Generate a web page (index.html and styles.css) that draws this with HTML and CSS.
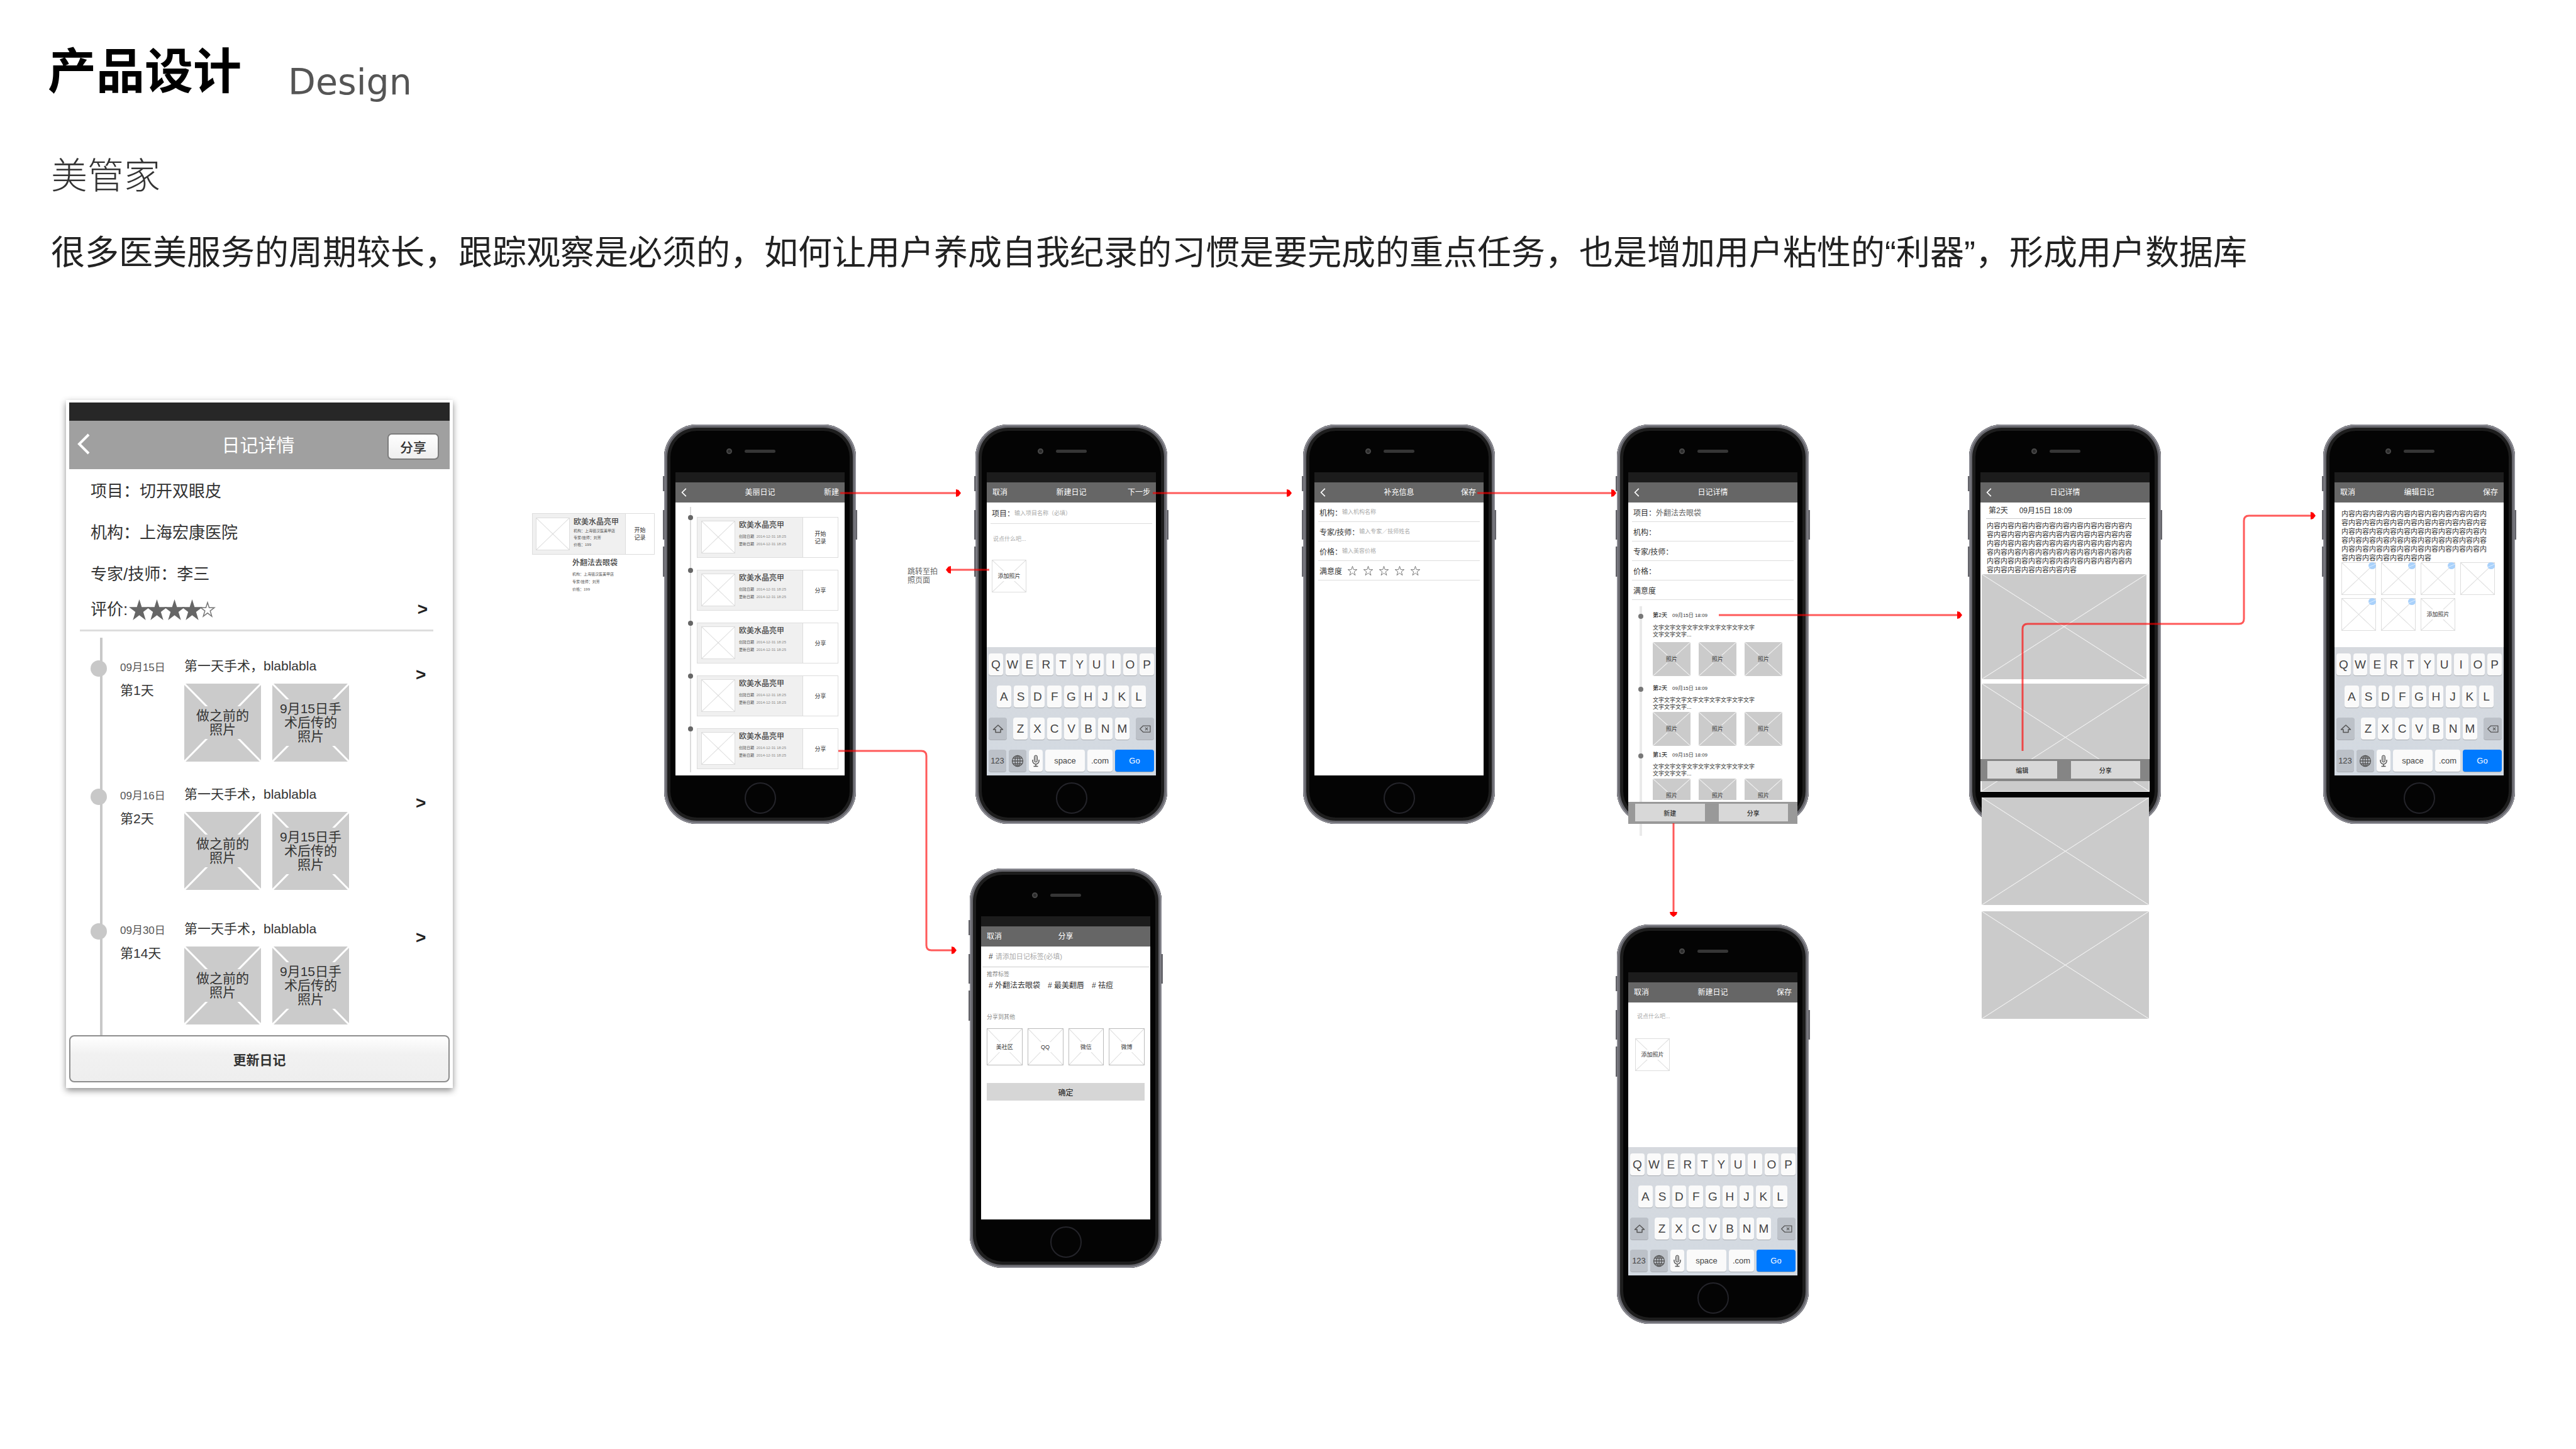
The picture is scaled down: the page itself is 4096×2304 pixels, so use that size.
FILE: index.html
```html
<!DOCTYPE html>
<html lang="zh-CN">
<head>
<meta charset="utf-8">
<title>产品设计 Design</title>
<link rel="stylesheet" href="styles.css">
</head>
<body>
<svg class="defs" aria-hidden="true">
  <symbol id="back" viewBox="0 0 20 34"><path d="M18 2 3 17l15 15" fill="none" stroke="#fff" stroke-width="4"/></symbol>
  <symbol id="star" viewBox="0 0 34 34"><path d="M17 0l4 12.500h13L23.500 20.500 27.500 34 17 26 6.500 34l4-13.500L0 12.500h13z"/></symbol>
  <symbol id="hollow" viewBox="0 0 26 26"><path d="M13 2l2.600 8.200h8.400l-6.800 5.200 2.600 8.600-6.800-5.200-6.800 5.200 2.600-8.600L2 10.200h8.400z" fill="#fff" stroke="#777" stroke-width="1.500"/></symbol>
  <symbol id="shift" viewBox="0 0 20 18"><path d="M10 3 2.500 10H6v4.500h8V10h3.500z" fill="none" stroke="#555" stroke-width="1.500" stroke-linejoin="round"/></symbol>
  <symbol id="erase" viewBox="0 0 24 18"><path d="M8 3h13.500v12H8L2 9zM12 6.500l5 5m0-5-5 5" fill="none" stroke="#555" stroke-width="1.500" stroke-linejoin="round"/></symbol>
  <symbol id="globe" viewBox="0 0 20 20"><g fill="none" stroke="#555" stroke-width="1.300"><circle cx="10" cy="10" r="8.500"/><ellipse cx="10" cy="10" rx="4" ry="8.500"/><path d="M1.500 10h17M10 1.500v17M3 5.500h14M3 14.500h14"/></g></symbol>
  <symbol id="mic" viewBox="0 0 16 20"><rect x="5.500" y="1" width="5" height="11" rx="2.500" fill="#bbb" stroke="#555"/><path d="M3 8v2a5 5 0 0 0 10 0V8M8 15v3.500M4.500 18.500h7" fill="none" stroke="#555" stroke-width="1.500"/></symbol>
</svg>

<header class="intro">
  <div class="heading">
    <h1>产品设计</h1>
    <span class="en">Design</span>
  </div>
  <h2>美管家</h2>
  <p>很多医美服务的周期较长，跟踪观察是必须的，如何让用户养成自我纪录的习惯是要完成的重点任务，也是增加用户粘性的“利器”，形成用户数据库</p>
</header>

<main class="flow">
  <article class="card">
    <div class="card-status"></div>
    <div class="card-nav">
      <svg class="card-back"><use href="#back"/></svg>
      <h3>日记详情</h3>
      <button class="share">分享</button>
    </div>
    <div class="info">
      <p>项目：切开双眼皮</p>
      <p>机构：上海宏康医院</p>
      <p>专家/技师：李三</p>
      <p class="rate">评价:
        <span class="stars"><svg><use href="#star"/></svg><svg><use href="#star"/></svg><svg><use href="#star"/></svg><svg><use href="#star"/></svg><svg class="off"><use href="#hollow"/></svg></span>
        <b>&gt;</b></p>
    </div>
    <ol class="diary">
      <li><time>09月15日</time><span>第一天手术，blablabla</span><b>&gt;</b><em>第1天</em>
        <div class="shots"><div class="shot"><span>做之前的<br>照片</span></div><div class="shot"><span>9月15日手<br>术后传的<br>照片</span></div></div></li>
      <li class="roomy"><time>09月16日</time><span>第一天手术，blablabla</span><b>&gt;</b><em>第2天</em>
        <div class="shots"><div class="shot"><span>做之前的<br>照片</span></div><div class="shot"><span>9月15日手<br>术后传的<br>照片</span></div></div></li>
      <li><time>09月30日</time><span>第一天手术，blablabla</span><b>&gt;</b><em>第14天</em>
        <div class="shots"><div class="shot"><span>做之前的<br>照片</span></div><div class="shot"><span>9月15日手<br>术后传的<br>照片</span></div></div></li>
    </ol>
    <button class="update">更新日记</button>
  </article>

  <div class="board">
    <div class="entry loose">
      <div class="entry-main"><i class="thumb"></i><div><h4>欧美水晶亮甲</h4><p>机构：上海铭汉医美甲店</p><p>专家/技师：刘芳</p><p>价格：199</p></div></div>
      <span class="entry-side">开始<br>记录</span>
    </div>
    <div class="loose-text"><h4>外翻法去眼袋</h4><p>机构：上海铭汉医美甲店</p><p>专家/技师：刘芳</p><p>价格：199</p></div>
    <p class="note">跳转至拍<br>照页面</p>

    <section class="phone at-list">
      <div class="bezel"><i class="camera"></i><i class="speaker"></i></div>
      <div class="status"></div>
      <div class="nav"><svg class="back"><use href="#back"/></svg><h3>美丽日记</h3><button>新建</button></div>
      <div class="screen list">
        <div class="entry"><div class="entry-main"><i class="thumb"></i><div><h4>欧美水晶亮甲</h4><p>创建日期 <time>2014-12-31 18:25</time></p><p>更新日期 <time>2014-12-31 18:25</time></p></div></div><span class="entry-side">开始<br>记录</span></div>
        <div class="entry"><div class="entry-main"><i class="thumb"></i><div><h4>欧美水晶亮甲</h4><p>创建日期 <time>2014-12-31 18:25</time></p><p>更新日期 <time>2014-12-31 18:25</time></p></div></div><span class="entry-side">分享</span></div>
        <div class="entry"><div class="entry-main"><i class="thumb"></i><div><h4>欧美水晶亮甲</h4><p>创建日期 <time>2014-12-31 18:25</time></p><p>更新日期 <time>2014-12-31 18:25</time></p></div></div><span class="entry-side">分享</span></div>
        <div class="entry"><div class="entry-main"><i class="thumb"></i><div><h4>欧美水晶亮甲</h4><p>创建日期 <time>2014-12-31 18:25</time></p><p>更新日期 <time>2014-12-31 18:25</time></p></div></div><span class="entry-side">分享</span></div>
        <div class="entry"><div class="entry-main"><i class="thumb"></i><div><h4>欧美水晶亮甲</h4><p>创建日期 <time>2014-12-31 18:25</time></p><p>更新日期 <time>2014-12-31 18:25</time></p></div></div><span class="entry-side">分享</span></div>
      </div>
      <div class="chin"><i class="home"></i></div>
    </section>

    <section class="phone at-create">
      <div class="bezel"><i class="camera"></i><i class="speaker"></i></div>
      <div class="status"></div>
      <div class="nav"><button>取消</button><h3>新建日记</h3><button>下一步</button></div>
      <div class="screen compose">
        <div class="field tall"><label for="item">项目：</label><input id="item" placeholder="输入项目名称（必填）"></div>
        <textarea aria-label="日记内容" placeholder="说点什么吧..."></textarea>
        <button class="thumb add"><span>添加照片</span></button>
        <div class="keys">
          <div class="row"><button>Q</button><button>W</button><button>E</button><button>R</button><button>T</button><button>Y</button><button>U</button><button>I</button><button>O</button><button>P</button></div>
          <div class="row second"><button>A</button><button>S</button><button>D</button><button>F</button><button>G</button><button>H</button><button>J</button><button>K</button><button>L</button></div>
          <div class="row third"><button class="dim" aria-label="Shift"><svg><use href="#shift"/></svg></button><button>Z</button><button>X</button><button>C</button><button>V</button><button>B</button><button>N</button><button>M</button><button class="dim" aria-label="Delete"><svg><use href="#erase"/></svg></button></div>
          <div class="row fourth"><button class="dim">123</button><button class="dim" aria-label="Language"><svg><use href="#globe"/></svg></button><button aria-label="Dictate"><svg><use href="#mic"/></svg></button><button>space</button><button>.com</button><button class="go">Go</button></div>
        </div>
      </div>
      <div class="chin"><i class="home"></i></div>
    </section>

    <section class="phone at-share">
      <div class="bezel"><i class="camera"></i><i class="speaker"></i></div>
      <div class="status"></div>
      <div class="nav"><button>取消</button><h3>分享</h3><span></span></div>
      <div class="screen sharing">
        <div class="tagline"><label for="tag"># </label><input id="tag" placeholder="请添加日记标签(必填)"></div>
        <p class="hint">推荐标签</p>
        <p class="tags"><span># 外翻法去眼袋</span><span># 最美翻唇</span><span># 祛痘</span></p>
        <p class="hint lower">分享到其他</p>
        <div class="targets"><button class="thumb"><span>美社区</span></button><button class="thumb"><span>QQ</span></button><button class="thumb"><span>微信</span></button><button class="thumb"><span>微博</span></button></div>
        <button class="confirm">确定</button>
      </div>
      <div class="chin"><i class="home"></i></div>
    </section>

    <section class="phone at-extra">
      <div class="bezel"><i class="camera"></i><i class="speaker"></i></div>
      <div class="status"></div>
      <div class="nav"><svg class="back"><use href="#back"/></svg><h3>补充信息</h3><button class="inset">保存</button></div>
      <div class="screen">
        <div class="field"><label for="org">机构：</label><input id="org" placeholder="输入机构名称"></div>
        <div class="field"><label for="pro">专家/技师：</label><input id="pro" placeholder="输入专家／技师姓名"></div>
        <div class="field"><label for="cost">价格：</label><input id="cost" placeholder="输入美容价格"></div>
        <div class="field">满意度<span class="score"><svg><use href="#hollow"/></svg><svg><use href="#hollow"/></svg><svg><use href="#hollow"/></svg><svg><use href="#hollow"/></svg><svg><use href="#hollow"/></svg></span></div>
      </div>
      <div class="chin"><i class="home"></i></div>
    </section>

    <section class="phone at-detail">
      <div class="bezel"><i class="camera"></i><i class="speaker"></i></div>
      <div class="status"></div>
      <div class="nav"><svg class="back"><use href="#back"/></svg><h3>日记详情</h3><span></span></div>
      <div class="screen detail">
        <div class="field">项目：<span>外翻法去眼袋</span></div>
        <div class="field">机构：</div>
        <div class="field">专家/技师：</div>
        <div class="field">价格：</div>
        <div class="field">满意度</div>
        <ol class="track">
          <li><b>第2天</b><time>09月15日 18:09</time><p>文字文字文字文字文字文字文字文字文字<br>文字文字文字...</p><div class="trio"><div><span>照片</span></div><div><span>照片</span></div><div><span>照片</span></div></div></li>
          <li><b>第2天</b><time>09月15日 18:09</time><p>文字文字文字文字文字文字文字文字文字<br>文字文字文字...</p><div class="trio"><div><span>照片</span></div><div><span>照片</span></div><div><span>照片</span></div></div></li>
          <li><b>第1天</b><time>09月15日 18:09</time><p>文字文字文字文字文字文字文字文字文字<br>文字文字文字...</p><div class="trio"><div><span>照片</span></div><div><span>照片</span></div><div><span>照片</span></div></div></li>
        </ol>
        <div class="bar low"><button>新建</button><button>分享</button></div>
      </div>
      <div class="chin"></div>
    </section>

    <section class="phone at-new">
      <div class="bezel"><i class="camera"></i><i class="speaker"></i></div>
      <div class="status"></div>
      <div class="nav"><button>取消</button><h3>新建日记</h3><button>保存</button></div>
      <div class="screen compose blank">
        <textarea aria-label="日记内容" placeholder="说点什么吧..."></textarea>
        <button class="thumb add"><span>添加照片</span></button>
        <div class="keys">
          <div class="row"><button>Q</button><button>W</button><button>E</button><button>R</button><button>T</button><button>Y</button><button>U</button><button>I</button><button>O</button><button>P</button></div>
          <div class="row second"><button>A</button><button>S</button><button>D</button><button>F</button><button>G</button><button>H</button><button>J</button><button>K</button><button>L</button></div>
          <div class="row third"><button class="dim" aria-label="Shift"><svg><use href="#shift"/></svg></button><button>Z</button><button>X</button><button>C</button><button>V</button><button>B</button><button>N</button><button>M</button><button class="dim" aria-label="Delete"><svg><use href="#erase"/></svg></button></div>
          <div class="row fourth"><button class="dim">123</button><button class="dim" aria-label="Language"><svg><use href="#globe"/></svg></button><button aria-label="Dictate"><svg><use href="#mic"/></svg></button><button>space</button><button>.com</button><button class="go">Go</button></div>
        </div>
      </div>
      <div class="chin"><i class="home"></i></div>
    </section>

    <section class="phone at-day">
      <div class="bezel"><i class="camera"></i><i class="speaker"></i></div>
      <div class="status"></div>
      <div class="nav"><svg class="back"><use href="#back"/></svg><h3>日记详情</h3><span></span></div>
      <div class="screen day">
        <p class="when"><span>第2天</span><time>09月15日 18:09</time></p>
        <p class="body">内容内容内容内容内容内容内容内容内容内容内<br>容内容内容内容内容内容内容内容内容内容内容<br>内容内容内容内容内容内容内容内容内容内容内<br>容内容内容内容内容内容内容内容内容内容内容<br>内容内容内容内容内容内容内容内容内容内容内<br>容内容内容内容内容内容内容</p>
        <div class="picture"></div>
        <div class="picture wide"></div>
        <div class="picture wide"></div>
        <div class="picture wide"></div>
        <div class="bar mid"><button>编辑</button><button>分享</button></div>
      </div>
      <div class="chin"></div>
    </section>

    <section class="phone at-edit">
      <div class="bezel"><i class="camera"></i><i class="speaker"></i></div>
      <div class="status"></div>
      <div class="nav"><button>取消</button><h3>编辑日记</h3><button>保存</button></div>
      <div class="screen compose editing">
        <p class="body">内容内容内容内容内容内容内容内容内容内容内<br>容内容内容内容内容内容内容内容内容内容内容<br>内容内容内容内容内容内容内容内容内容内容内<br>容内容内容内容内容内容内容内容内容内容内容<br>内容内容内容内容内容内容内容内容内容内容内<br>容内容内容内容内容内容内容</p>
        <div class="gallery"><i class="thumb del"></i><i class="thumb del"></i><i class="thumb del"></i><i class="thumb del"></i><i class="thumb del"></i><i class="thumb del"></i><button class="thumb"><span>添加照片</span></button></div>
        <div class="keys">
          <div class="row"><button>Q</button><button>W</button><button>E</button><button>R</button><button>T</button><button>Y</button><button>U</button><button>I</button><button>O</button><button>P</button></div>
          <div class="row second"><button>A</button><button>S</button><button>D</button><button>F</button><button>G</button><button>H</button><button>J</button><button>K</button><button>L</button></div>
          <div class="row third"><button class="dim" aria-label="Shift"><svg><use href="#shift"/></svg></button><button>Z</button><button>X</button><button>C</button><button>V</button><button>B</button><button>N</button><button>M</button><button class="dim" aria-label="Delete"><svg><use href="#erase"/></svg></button></div>
          <div class="row fourth"><button class="dim">123</button><button class="dim" aria-label="Language"><svg><use href="#globe"/></svg></button><button aria-label="Dictate"><svg><use href="#mic"/></svg></button><button>space</button><button>.com</button><button class="go">Go</button></div>
        </div>
      </div>
      <div class="chin"><i class="home"></i></div>
    </section>

    <svg class="links" aria-hidden="true">
      <marker id="tip" viewBox="0 0 8 12" refX="7" refY="6" markerWidth="8" markerHeight="12" markerUnits="userSpaceOnUse" orient="auto"><path d="M0 0l4 1 4 5-4 5-4 1z" fill="#f00"/></marker>
      <path d="M596 148H787"/>
      <path d="M1093 148H1313"/>
      <path d="M1609 148H1829"/>
      <path d="M833 270H765"/>
      <path d="M593 558H725q8 0 8 8V867q0 8 8 8H780"/>
      <path d="M1993 342H2379"/>
      <path d="M1921 673V821"/>
      <path d="M2476 558V364q0-8 8-8H2820q8 0 8-8V192q0-8 8-8H2941"/>
    </svg>
  </div>
</main>
</body>
</html>
```
FILE: styles.css
```css
* { box-sizing: border-box; margin: 0; padding: 0; }
body { background: #fff; color: #333; font-family: "Liberation Sans", "Noto Sans CJK SC", sans-serif; }
button, input, textarea { font: inherit; color: inherit; border: 0; background: none; border-radius: 0; }
ol { list-style: none; }
i, em { font-style: normal; }
svg { display: block; }
.defs { position: absolute; width: 0; height: 0; }

/* Intro */
.intro { padding: 74px 76px 194px; }
.heading { display: flex; gap: 74px; height: 90px; }
h1 { font-size: 77px; line-height: 80px; font-weight: 700; color: #000; }
.en { padding-top: 24px; font: 57px/64px "DejaVu Sans", sans-serif; color: #555; }
h2 { margin-top: 76px; padding-left: 5px; font-size: 58px; line-height: 80px; font-weight: 300; color: #333; }
.intro > p { margin-top: 42px; padding-left: 5px; font-size: 54px; line-height: 80px; font-weight: 400; color: #222; }

.flow { display: flex; align-items: flex-start; padding-left: 105px; }

/* Detail card */
.card { flex: none; width: 615px; margin-right: 20px; padding: 4px 5px 9px; background: #fff; box-shadow: 0 4px 10px rgba(0, 0, 0, .45); }
.card-status { height: 29px; background: #272727; }
.card-nav { display: grid; grid-template-columns: 120px 1fr 120px; align-items: center; height: 77px; padding: 0 17px 4px 13px; background: #a0a0a0; }
.card-back { width: 20px; height: 34px; }
.card-nav h3 { text-align: center; font-size: 29px; font-weight: 400; color: #fff; }
.share { justify-self: end; width: 82px; height: 42px; margin-top: 8px; border: 2px solid #7c7c7c; border-radius: 7px; background: linear-gradient(#fff, #eee); font-size: 21px; font-weight: 500; }
.info { margin: 0 26px 0 17px; padding: 2px 0 9px 17px; border-bottom: 3px solid #ddd; font-size: 26px; }
.info p { line-height: 66px; }
.info .rate { display: flex; align-items: center; line-height: 46px; }
.stars { display: flex; align-items: center; margin-left: 2px; }
.stars svg { width: 33px; height: 33px; margin-right: -5px; fill: #666; }
.stars .off { width: 26px; height: 26px; margin-right: 0; }
.card b { font-size: 28px; color: #222; }
.rate b { margin: 0 9px 0 auto; }
.diary { position: relative; padding: 44px 0 17px; }
.diary::before { content: ""; position: absolute; left: 49px; top: 10px; bottom: 0; width: 4px; background: #c8c8c8; }
.diary li { position: relative; display: grid; grid-template-columns: 102px 1fr 54px; grid-template-rows: 22px 124px; row-gap: 17px; padding: 0 0 41px 81px; font-size: 21px; line-height: 22px; }
.diary .roomy { padding-bottom: 51px; }
.diary li:last-child { padding-bottom: 0; }
.diary li::before { content: ""; position: absolute; left: 34px; top: 2px; width: 26px; height: 26px; border-radius: 50%; background: #c8c8c8; }
.diary time { padding-top: 3px; font-size: 17px; color: #555; }
.diary b { padding-top: 14px; }
.shots { display: flex; gap: 18px; }
.shot { display: grid; place-items: center; width: 122px; height: 124px; text-align: center;
  background: linear-gradient(to top right, transparent calc(50% - 2px), #fff calc(50% - 1px), #fff calc(50% + 1px), transparent calc(50% + 2px)), linear-gradient(to bottom right, transparent calc(50% - 2px), #fff calc(50% - 1px), #fff calc(50% + 1px), transparent calc(50% + 2px)), #cbcbcb; }
.shot span { width: 100%; padding: 4px 0; background: #cbcbcb; }
.update { display: block; width: 100%; height: 75px; border: 2px solid #8c8c8c; border-radius: 8px; background: linear-gradient(#fff, #f1f1f1 40%, #eee); font-size: 21px; font-weight: 700; }

/* Flow board */
.board { position: relative; flex: 1; height: 1480px; font-size: 12px; }
.links { position: absolute; inset: 0; width: 100%; height: 100%; fill: none; stroke: rgba(255, 0, 0, .65); stroke-width: 3; }
.links > path { marker-end: url(#tip); }
.links marker path { stroke: none; }

.phone { position: absolute; display: flex; flex-direction: column; width: 305px; height: 635px; padding: 0 18px; border-radius: 52px; background: #040404; box-shadow: inset 0 0 0 2px #8c8c94, inset 0 0 0 5px #66666c, inset 0 0 0 10px #1d1d1d; }
.phone::before { content: ""; position: absolute; left: -2px; top: 82px; width: 3px; height: 160px; background: linear-gradient(#66666c 24px, transparent 24px 54px, #66666c 54px 101px, transparent 101px 112px, #66666c 112px); }
.phone::after { content: ""; position: absolute; right: -2px; top: 136px; width: 3px; height: 47px; background: #66666c; }
.at-list { left: 316px; top: 39px; }
.at-create { left: 811px; top: 39px; }
.at-share { left: 802px; top: 745px; }
.at-extra { left: 1332px; top: 39px; }
.at-detail { left: 1831px; top: 39px; }
.at-new { left: 1831px; top: 834px; }
.at-day { left: 2391px; top: 39px; }
.at-edit { left: 2954px; top: 39px; }
.bezel { flex: none; display: grid; grid-template-columns: 1fr 49px 1fr; align-items: center; height: 76px; padding-top: 8px; }
.camera { justify-self: end; width: 9px; height: 9px; margin-right: 20px; border-radius: 50%; background: #2c2c2c; border: 2px solid #484848; }
.speaker { height: 5px; border-radius: 3px; background: #363636; }
.status { flex: none; height: 16px; background: #1c1c1c; }
.nav { flex: none; display: grid; grid-template-columns: 1fr 1fr 1fr; align-items: center; height: 32px; padding: 0 9px; background: #666; color: #fff; line-height: 16px; }
.nav h3 { text-align: center; font-size: 12px; font-weight: 400; }
.nav button { justify-self: start; }
.nav :last-child { justify-self: end; }
.nav .inset { margin-right: 3px; }
.back { width: 9px; height: 14px; }
.screen { position: relative; flex: none; display: flex; flex-direction: column; height: 434px; background: #fff; }
.chin { flex: 1; display: grid; place-items: center; }
.home { width: 50px; height: 50px; margin-top: -6px; border-radius: 50%; border: 2px solid #24242a; }

.thumb { display: grid; place-items: center; width: 55px; height: 52px; border: 1px solid #ddd; font-size: 9px; line-height: 12px;
  background: linear-gradient(to top right, transparent calc(50% - 1px), #ddd 50%, transparent calc(50% + 1px)), linear-gradient(to bottom right, transparent calc(50% - 1px), #ddd 50%, transparent calc(50% + 1px)), #fff; }
.thumb span { padding: 2px; background: #fff; }

/* List entries */
.entry { display: flex; height: 65px; border: 1px solid #ddd; }
.entry-main { display: flex; gap: 6px; width: 168px; padding: 5px 6px; background: #f0f0f0; border-right: 1px solid #ddd; }
.entry-main .thumb { flex: none; width: 54px; }
.entry h4, .loose-text h4 { font-size: 12px; line-height: 14px; font-weight: 500; color: #444; margin-bottom: 5px; white-space: nowrap; }
.entry p, .loose-text p { font-size: 6px; line-height: 12px; color: #555; white-space: nowrap; }
.entry time { margin-left: 2px; color: #888; }
.entry-side { flex: 1; display: grid; place-items: center; text-align: center; font-size: 9px; line-height: 12px; }
.loose { position: absolute; left: 106px; top: 180px; width: 195px; height: 66px; }
.loose .entry-main { width: 148px; padding: 6px 5px; }
.loose h4 { margin-bottom: 2px; }
.loose p { line-height: 11px; }
.loose-text { position: absolute; left: 170px; top: 252px; }
.note { position: absolute; left: 703px; top: 266px; line-height: 14px; color: #666; }
.list { gap: 19px; padding: 23px 10px 0 34px; }
.list::before { content: ""; position: absolute; left: 23px; top: 7px; bottom: 5px; width: 2px; background: #ddd; }
.list .entry { position: relative; }
.list .entry::before { content: ""; position: absolute; left: -15px; top: -4px; width: 8px; height: 8px; border-radius: 50%; background: #666; }

/* Forms */
.field { flex: none; display: flex; align-items: center; height: 31px; margin: 0 6px; padding: 0 2px; border-bottom: 1px solid #ddd; }
.field.tall { height: 34px; }
.field input { flex: 1; min-width: 0; font-size: 9px; }
::placeholder { color: #aaa; opacity: 1; }
.field span { color: #666; }
.score { display: flex; gap: 8px; margin-left: 8px; }
.score svg { width: 17px; height: 17px; }
.compose textarea { display: block; height: 45px; margin: 17px 10px 0; font-size: 9px; line-height: 14px; resize: none; }
.add { flex: none; margin: -5px 8px 0; }
.blank textarea { margin: 15px 14px 0; height: 42px; }
.blank .add { margin: 0 11px; }
.keys { margin-top: auto; display: grid; gap: 16px; height: 204px; padding: 10px 3px 6px; background: linear-gradient(#d6d9de, #d3dae2); }
.row { display: grid; grid-template-columns: repeat(10, 1fr); gap: 4px; height: 35px; }
.second { grid-template-columns: repeat(9, 1fr); margin: 0 13px; }
.third { grid-template-columns: 29px 2px repeat(7, 1fr) 2px 29px; }
.third button:nth-child(2) { grid-column: 3; }
.third button:last-child { grid-column: 11; }
.fourth { grid-template-columns: 28px 28px 22px 63px 1fr 62px; }
.keys button { display: grid; place-items: center; border-radius: 4px; background: #fafafa; box-shadow: 0 1px 0 #a9adb3; font-size: 19px; line-height: 35px; color: #444; }
.keys .fourth button { font-size: 13px; }
.keys .dim { background: #bcc1c8; }
.keys .go { background: #007aff; color: #fff; }
.keys svg { width: 20px; height: 20px; }

.sharing { padding: 0 9px; }
.tagline { display: flex; align-items: center; gap: 4px; height: 33px; margin: 0 -7px; padding: 0 10px; border-bottom: 1px solid #ccc; }
.tagline input { flex: 1; font-size: 11px; }
.hint { margin-top: 4px; font-size: 9px; line-height: 14px; color: #888; }
.tags { display: flex; gap: 12px; margin-top: 3px; padding-left: 3px; line-height: 16px; }
.hint.lower { margin-top: 35px; }
.targets { display: flex; gap: 8px; margin-top: 11px; }
.targets .thumb { flex: 1; height: 59px; border-color: #bbb; }
.confirm { margin-top: 28px; height: 28px; background: #d6d6d6; font-weight: 500; }

/* Diary detail */
.detail { height: 511px; }
.track { position: relative; height: 442px; padding: 18px 0 0 39px; font-size: 9px; line-height: 12px; }
.track::before { content: ""; position: absolute; left: 18px; top: 10px; height: 365px; width: 4px; background: #eaeaea; }
.track li { position: relative; height: 116px; }
.track li + li { height: 106px; }
.track li::before { content: ""; position: absolute; left: -23px; top: 4px; width: 8px; height: 8px; border-radius: 50%; background: #777; }
.track b { margin-right: 8px; font-weight: 500; }
.track time { font-size: 8px; }
.track p { margin: 8px 0 6px; line-height: 11px; }
.track li + li p { margin: 7px 0 2px; }
.trio { display: flex; gap: 13px; }
.trio div { display: grid; place-items: center; width: 60px; height: 54px;
  background: linear-gradient(to top right, transparent calc(50% - 1px), #f4f4f4 50%, transparent calc(50% + 1px)), linear-gradient(to bottom right, transparent calc(50% - 1px), #f4f4f4 50%, transparent calc(50% + 1px)), #cbcbcb; }
.trio span { background: #cbcbcb; }
.track li:last-child .trio { height: 34px; overflow: hidden; }
.bar { position: absolute; left: 0; right: 0; display: grid; grid-template-columns: 1fr 1fr; gap: 22px; height: 35px; padding: 3px 15px 4px 11px; background: #999; }
.bar button { background: #d8d8d8; font-size: 10px; font-weight: 500; }
.low { bottom: 0; }
.mid { top: 408px; background: #858585; }

.day { height: 460px; }
.when { flex: none; display: flex; gap: 18px; height: 26px; margin: 0 6px 0 9px; padding: 0 4px; border-bottom: 1px solid #ccc; line-height: 27px; }
.body { flex: none; margin-left: 10px; font-size: 11px; line-height: 14px; white-space: nowrap; }
.day .body { padding-top: 4px; }
.picture { flex: none; width: 262px; height: 167px; margin: 0 0 7px 2px;
  background: linear-gradient(to top right, transparent calc(50% - 1px), #f4f4f4 50%, transparent calc(50% + 1px)), linear-gradient(to bottom right, transparent calc(50% - 1px), #f4f4f4 50%, transparent calc(50% + 1px)), #cbcbcb; }
.picture.wide { width: 266px; height: 171px; margin-bottom: 10px; }
.editing .body { margin: 11px 0 0 11px; }
.gallery { display: grid; grid-template-columns: repeat(4, 55px); gap: 5px 8px; margin: 0 11px; }
.del { position: relative; }
.del::after { content: ""; position: absolute; right: -1px; top: -1px; width: 12px; height: 11px; border-radius: 50%; background: linear-gradient(155deg, #a9d1fb 45%, #e6f2fe 50%, #a9d1fb 55%); }
```
